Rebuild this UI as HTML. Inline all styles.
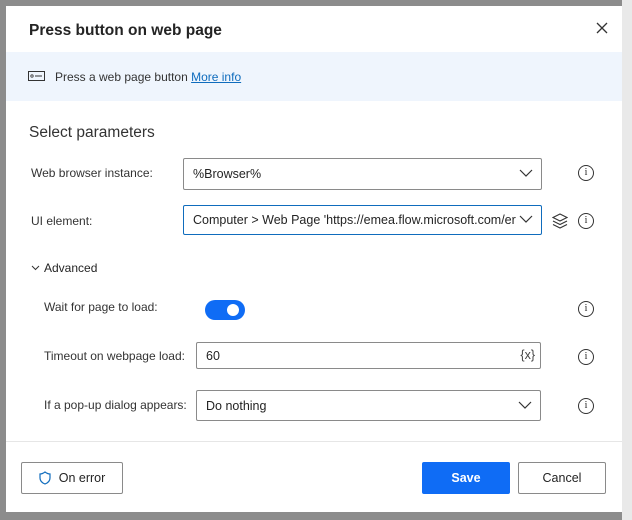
<!DOCTYPE html>
<html><head><style>
*{box-sizing:border-box;margin:0;padding:0}
body{width:632px;height:520px;background:#8c8c8c;font-family:"Liberation Sans",sans-serif;color:#242424;position:relative;overflow:hidden}
.dlg{position:absolute;left:6px;top:6px;width:616px;height:506px;background:#fff}
.a{position:absolute}
.lbl{font-size:12px;color:#333}
.box{position:absolute;border:1px solid #8a8a8a;border-radius:2px;background:#fff;font-size:12.5px;padding-left:9px;display:flex;align-items:center}
.chev{position:absolute;right:8px;top:50%;margin-top:-5px}
.info{position:absolute;width:16px;height:16px;border:1.3px solid #333;border-radius:50%;font-size:10px;text-align:center;line-height:13px;font-family:"Liberation Serif",serif}
.btn{position:absolute;height:32px;border:1px solid #8a8a8a;border-radius:2px;font-size:12.5px;display:flex;align-items:center;justify-content:center;background:#fff}
</style></head><body>
<div class="a" style="left:622px;top:0;width:10px;height:520px;background:#e9e9e9"></div>
<div class="dlg">
 <div class="a" style="left:23px;top:16px;font-size:15.5px;font-weight:bold;color:#242424">Press button on web page</div>
 <svg class="a" style="left:590px;top:16px" width="12" height="12"><path d="M1 1L11 11M11 1L1 11" stroke="#333" stroke-width="1.3"/></svg>
 <div class="a" style="left:0;top:46px;width:616px;height:49px;background:#eff5fd"></div>
 <svg class="a" style="left:22px;top:65px" width="17" height="10"><rect x="0.5" y="0.5" width="16" height="9" fill="none" stroke="#333"/><circle cx="4" cy="5" r="1.2" fill="none" stroke="#333" stroke-width=".8"/><path d="M7 5H14" stroke="#333"/></svg>
 <div class="a lbl" style="left:49px;top:64px;font-size:12px">Press a web page button <span style="color:#0f6cbd;text-decoration:underline">More info</span></div>
 <div class="a" style="left:23px;top:118px;font-size:15.5px;color:#333">Select parameters</div>
 <div class="a lbl" style="left:25px;top:160px">Web browser instance:</div>
 <div class="box" style="left:177px;top:152px;width:359px;height:32px">%Browser%<svg class="chev" width="14" height="9"><path d="M1 1L7 7L13 1" stroke="#333" fill="none" stroke-width="1.2"/></svg></div>
 <div class="info" style="left:572px;top:159px">i</div>
 <div class="a lbl" style="left:25px;top:208px">UI element:</div>
 <div class="box" style="left:177px;top:199px;width:359px;height:30px;border-color:#0f6cbd;overflow:hidden;white-space:nowrap">Computer &gt; Web Page 'https://emea.flow.microsoft.com/er<svg class="chev" style="background:#fff" width="14" height="9"><path d="M1 1L7 7L13 1" stroke="#333" fill="none" stroke-width="1.2"/></svg></div>
 <svg class="a" style="left:546px;top:207px" width="16" height="16"><path d="M8 1L15 4.5L8 8L1 4.5Z M1 8L8 11.5L15 8 M1 11.5L8 15L15 11.5" stroke="#333" fill="none" stroke-width="1.1"/></svg>
 <div class="info" style="left:572px;top:207px">i</div>
 <svg class="a" style="left:25px;top:259px" width="9" height="6"><path d="M1 1L4.5 4.5L8 1" stroke="#333" fill="none"/></svg>
 <div class="a lbl" style="left:38px;top:255px;color:#242424">Advanced</div>
 <div class="a lbl" style="left:38px;top:294px">Wait for page to load:</div>
 <div class="a" style="left:199px;top:294px;width:40px;height:20px;border-radius:10px;background:#0f6cf5"><div class="a" style="left:22px;top:4px;width:12px;height:12px;border-radius:50%;background:#fff"></div></div>
 <div class="info" style="left:572px;top:295px">i</div>
 <div class="a lbl" style="left:38px;top:343px">Timeout on webpage load:</div>
 <div class="box" style="left:190px;top:336px;width:345px;height:27px">60<span class="a" style="right:5px;top:5px;font-size:12.5px;color:#444">{x}</span></div>
 <div class="info" style="left:572px;top:343px">i</div>
 <div class="a lbl" style="left:38px;top:392px">If a pop-up dialog appears:</div>
 <div class="box" style="left:190px;top:384px;width:345px;height:31px">Do nothing<svg class="chev" width="14" height="9"><path d="M1 1L7 7L13 1" stroke="#333" fill="none" stroke-width="1.2"/></svg></div>
 <div class="info" style="left:572px;top:392px">i</div>
 <div class="a" style="left:0;top:435px;width:616px;height:1px;background:#e6e6e6"></div>
 <div class="btn" style="left:15px;top:456px;width:102px;height:32px"><svg width="12" height="14" style="margin-right:8px"><path d="M6 1C4 2.5 2.5 3 1 3V7C1 10 3.5 12 6 13C8.5 12 11 10 11 7V3C9.5 3 8 2.5 6 1Z" stroke="#0f6cbd" fill="none" stroke-width="1.2"/></svg>On error</div>
 <div class="btn" style="left:416px;top:456px;width:88px;background:#0f6cf5;border-color:#0f6cf5;color:#fff;font-weight:bold">Save</div>
 <div class="btn" style="left:512px;top:456px;width:88px">Cancel</div>
</div>
</body></html>
